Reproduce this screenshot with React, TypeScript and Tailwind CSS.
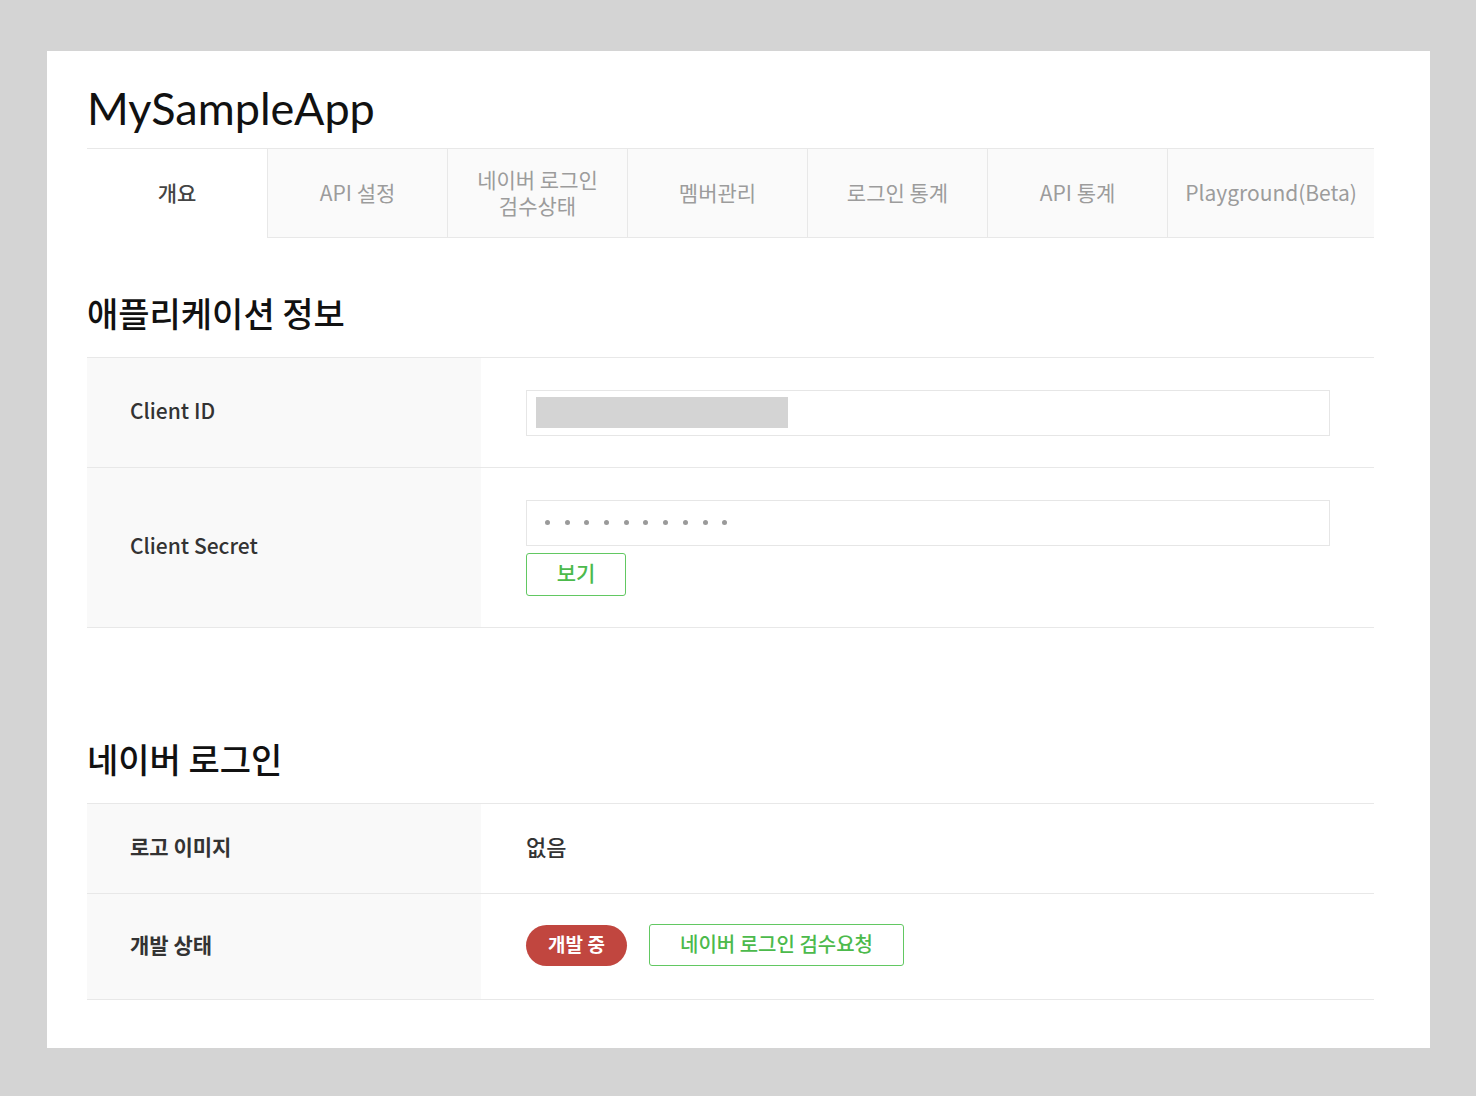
import React from "react";

const KR = { fontFamily: '"Noto Sans CJK KR", "Noto Sans", sans-serif' };

const tabs: { label: string[]; active?: boolean }[] = [
  { label: ["개요"], active: true },
  { label: ["API 설정"] },
  { label: ["네이버 로그인", "검수상태"] },
  { label: ["멤버관리"] },
  { label: ["로그인 통계"] },
  { label: ["API 통계"] },
  { label: ["Playground(Beta)"] },
];

function Row({
  label,
  bold,
  height,
  valuePad,
  children,
}: {
  label: string;
  bold?: boolean;
  height: string;
  valuePad?: string;
  children: React.ReactNode;
}) {
  return (
    <div className={`flex border-b border-[#e8e8e8] ${height}`}>
      <div
        className={`w-[394px] shrink-0 bg-[#f9f9f9] pl-[43px] pb-[4px] flex items-center text-[21px] text-[#333] ${
          bold ? "font-bold" : "font-medium"
        }`}
      >
        {label}
      </div>
      <div className={`flex-1 pl-[45px] pr-[44px] flex items-center ${valuePad ?? ""}`}>{children}</div>
    </div>
  );
}

export default function App() {
  return (
    <div className="w-[1476px] h-[1096px] bg-[#d4d4d4] pt-[51px] pl-[47px]" style={KR}>
      <div className="w-[1383px] h-[997px] bg-white pl-[40px] pr-[56px] pt-[27px]">
        <h1
          className="text-[45px] leading-[60px] text-[#111] mb-[10px]"
          style={{ fontFamily: 'Lato, "Noto Sans", sans-serif' }}
        >
          MySampleApp
        </h1>

        <div className="flex border-t border-[#e8e8e8] h-[90px]">
          {tabs.map((t, i) => (
            <div
              key={i}
              className={`flex flex-col items-center justify-center pb-[3px] text-[21px] leading-[26px] ${
                i === tabs.length - 1 ? "flex-1" : "w-[180px] shrink-0"
              } ${
                t.active
                  ? "bg-white text-[#444] font-medium"
                  : "bg-[#fafafa] text-[#9c9c9c] border-l border-b border-[#e8e8e8]"
              }`}
            >
              {t.label.map((l, j) => (
                <span key={j} className="whitespace-nowrap leading-[26px]">
                  {l}
                </span>
              ))}
            </div>
          ))}
        </div>

        <h2 className="mt-[55px] mb-[24px] text-[34px] leading-[40px] text-[#111] font-medium">
          애플리케이션 정보
        </h2>
        <div className="border-t border-[#e8e8e8]">
          <Row label="Client ID" height="h-[110px]">
            <div className="w-full h-[46px] border border-[#e6e6e6] pl-[9px] pt-[6px]">
              <div className="w-[252px] h-[31px] bg-[#d4d4d4]" />
            </div>
          </Row>
          <Row label="Client Secret" height="h-[160px]">
            <div className="w-full flex flex-col gap-[7px]">
              <div className="w-full h-[46px] border border-[#e6e6e6] pl-[18px] flex items-center gap-[14.7px]">
                {Array.from({ length: 10 }).map((_, i) => (
                  <div key={i} className="w-[5px] h-[5px] rounded-full bg-[#9a9a9a]" />
                ))}
              </div>
              <button className="w-[100px] h-[43px] border border-[#62c862] rounded-[3px] text-[21px] text-[#4cba4c] font-medium bg-white pb-[2px]">
                보기
              </button>
            </div>
          </Row>
        </div>

        <h2 className="mt-[111px] mb-[24px] text-[34px] leading-[40px] text-[#111] font-medium">
          네이버 로그인
        </h2>
        <div className="border-t border-[#e8e8e8]">
          <Row label="로고 이미지" bold height="h-[90px]" valuePad="pb-[4px]">
            <span className="text-[22px] text-[#333] font-medium">없음</span>
          </Row>
          <Row label="개발 상태" bold height="h-[106px]" valuePad="pb-[3px]">
            <div className="flex items-center gap-[22px]">
              <span className="w-[101px] h-[41px] pb-[2px] rounded-full bg-[#c1463f] text-white text-[19px] font-bold flex items-center justify-center">
                개발 중
              </span>
              <button className="w-[255px] h-[42px] pb-[2px] border border-[#62c862] rounded-[3px] text-[20px] text-[#4cba4c] font-medium bg-white">
                네이버 로그인 검수요청
              </button>
            </div>
          </Row>
        </div>
      </div>
    </div>
  );
}
